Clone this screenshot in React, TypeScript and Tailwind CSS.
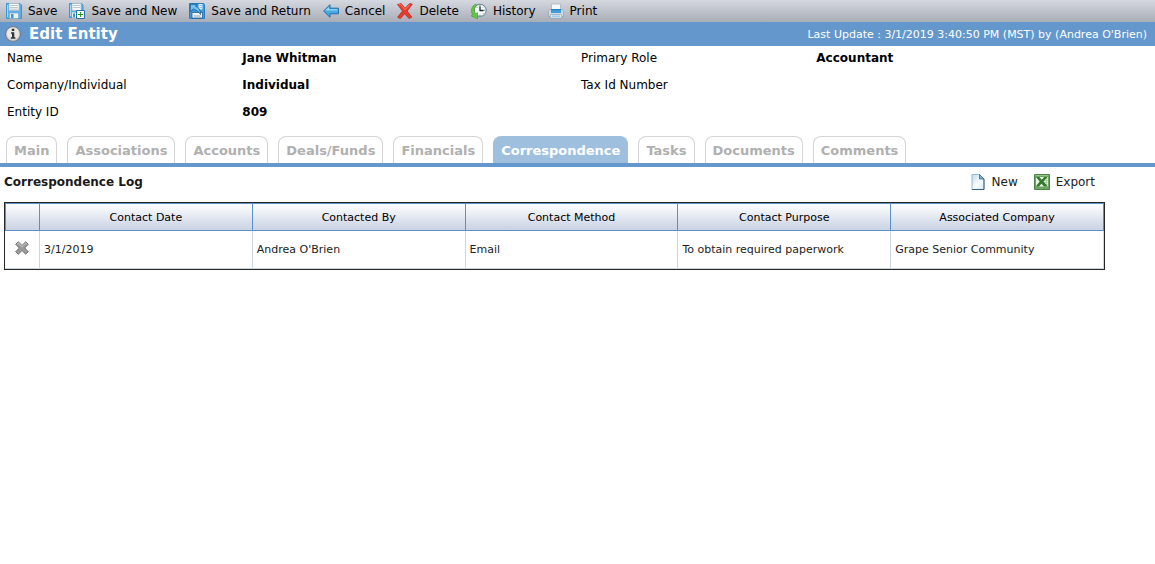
import { useState, ReactNode } from 'react';

const SaveIcon = () => (
  <svg width="16" height="16" viewBox="0 0 16 16" aria-hidden="true">
    <path d="M0.5 0.5h13.5l1.5 1.5v13.5h-15z" fill="#5db0e6" stroke="#3d96cf" />
    <path d="M3 0.5h10v7H3z" fill="#f4f6f8" stroke="#a9b9c6" strokeWidth="0.6" />
    <path d="M4 2.5h8M4 4.5h8M4 6.2h8" stroke="#b4bcc2" strokeWidth="0.8" />
    <path d="M3.5 10h9v5.5h-9z" fill="#edf1f4" stroke="#6fa3c4" strokeWidth="0.6" />
    <path d="M5 11h2.5v4H5z" fill="#3b97d0" />
    <path d="M1.5 2v12" stroke="#a5dafa" />
  </svg>
);

const SaveNewIcon = () => (
  <svg width="16" height="16" viewBox="0 0 16 16" aria-hidden="true">
    <path d="M0.5 0.5h12l1.5 1.5v12.5h-13.5z" fill="#5db0e6" stroke="#3d96cf" />
    <path d="M3 0.5h9v7H3z" fill="#f4f6f8" stroke="#a9b9c6" strokeWidth="0.6" />
    <path d="M4 2.5h7M4 4.5h7" stroke="#b4bcc2" strokeWidth="0.8" />
    <path d="M3 9.5h4.5v5H3z" fill="#edf1f4" />
    <path d="M4 10.5h2v3.5H4z" fill="#3b97d0" />
    <path d="M7.5 7.5h8v8h-8z" fill="#ffffff" stroke="#2874a8" />
    <path d="M11.5 9v5M9 11.5h5" stroke="#2a9a2a" strokeWidth="1.2" />
    <path d="M1.5 2v11" stroke="#a5dafa" />
  </svg>
);

const SaveReturnIcon = () => (
  <svg width="16" height="16" viewBox="0 0 16 16" aria-hidden="true">
    <path d="M0.5 0.5h14l1 1v14h-15z" fill="#3c9adb" stroke="#2c7fbe" />
    <path d="M9.5 1h4v5.5h-4z" fill="#dcecf8" />
    <path d="M10.5 2.5h2.5M10.5 4.5h2.5" stroke="#8ab4d4" strokeWidth="0.8" />
    <path d="M3 9.5h10.5v5.5H3z" fill="#eef3f7" stroke="#1c5685" strokeWidth="0.7" />
    <path d="M5 13h6.5" stroke="#89a5ba" />
    <path d="M1.3 1.3h6.9L6.5 3.2c3 0.8 5 3.6 5 8.3C9.7 8.6 7.5 7 4.3 6L1.3 8.8z" fill="#72c3f3" stroke="#17598f" strokeWidth="0.8" />
  </svg>
);

const CancelIcon = () => (
  <svg width="16" height="16" viewBox="0 0 16 16" aria-hidden="true">
    <path d="M0.6 8L7 1.7v3.5h8.4v5.6H7v3.5z" fill="#45a9e4" stroke="#1f6fae" strokeLinejoin="round" />
    <path d="M2.2 7.6L6 3.9v2.4h8.3v1.3z" fill="#9cd8f8" />
  </svg>
);

const DeleteIcon = () => (
  <svg width="16" height="16" viewBox="0 0 16 16" aria-hidden="true">
    <path
      d="M0.5 1.5L4.2 0.6 8 5.3 12.7 0.5l2.6 0.7L10.2 8l4.6 6.2-2.8 1.3L7.7 10.8 3.3 15.6 0.6 14.2 5.5 8z"
      fill="#ea3a2a"
      stroke="#b91e16"
      strokeWidth="0.7"
      strokeLinejoin="round"
    />
    <path d="M1.8 1.9l2-0.4L8 6.7l4.8-5" stroke="#ff8a76" strokeWidth="0.9" fill="none" />
  </svg>
);

const HistoryIcon = () => (
  <svg width="16" height="16" viewBox="0 0 16 16" aria-hidden="true">
    <circle cx="8.7" cy="7.5" r="7" fill="#8fa9b8" />
    <circle cx="9.1" cy="7.3" r="5.9" fill="#f7fafb" stroke="#526c7b" strokeWidth="0.6" />
    <path
      d="M4.5 1.2C0.6 3 -0.6 8 1.6 11.6L0.2 13l6.3 2.7V9.6L4.6 10.8C3 8.6 2.8 4.8 5.6 2.2z"
      fill="#62c944"
      stroke="#2d861d"
      strokeWidth="0.5"
    />
    <path d="M9 3.3v4.2h3.6" stroke="#1b2c38" strokeWidth="1.3" fill="none" />
    <path d="M9 2v1M9 11.7v1M14.2 7.3h-1M12.6 3.8l-0.6 0.6M12.6 10.9l-0.6-0.6M5.6 4.1l0.5 0.5" stroke="#3c4e59" strokeWidth="0.8" />
  </svg>
);

const PrintIcon = () => (
  <svg width="16" height="16" viewBox="0 0 16 16" aria-hidden="true">
    <path d="M3.5 1h9v6h-9z" fill="#f5f8fa" stroke="#a4b0ba" strokeWidth="0.7" />
    <path d="M0.5 8L2 6.5h12L15.5 8v5.5h-15z" fill="#d3dce3" stroke="#8fa0ae" strokeWidth="0.7" />
    <path d="M3 6h10v4H3z" fill="#3f9eda" />
    <path d="M3 6h10v1.2H3z" fill="#2b7fbe" />
    <path d="M2.8 11.5h10.4l0.8 3.5H2z" fill="#f7fafc" stroke="#7794a9" strokeWidth="0.6" />
    <path d="M3.8 12.4h8.4l0.3 1.4H3.5z" fill="#7bbfe7" />
  </svg>
);

const InfoIcon = () => (
  <svg width="16" height="16" viewBox="0 0 16 16" aria-hidden="true">
    <circle cx="8" cy="8" r="7.4" fill="#d0d0d0" stroke="#6d7378" strokeWidth="0.9" />
    <circle cx="8" cy="7.4" r="6" fill="#e8e8e8" />
    <path d="M6.8 2.8h2.5v2.3H6.8zM6 6.3h3.3v5h1.1v1.4H5.8v-1.4H7V7.7H6z" fill="#333333" />
  </svg>
);

const NewIcon = () => (
  <svg width="16" height="16" viewBox="0 0 16 16" aria-hidden="true">
    <defs>
      <linearGradient id="page" x1="0" y1="0" x2="1" y2="1">
        <stop offset="0" stopColor="#bcdcf0" />
        <stop offset="0.55" stopColor="#f8fcff" />
        <stop offset="1" stopColor="#d6e8f4" />
      </linearGradient>
    </defs>
    <path d="M2 0.5h7.5L14 5v10.5H2z" fill="url(#page)" stroke="#86a9c0" strokeWidth="0.8" />
    <path d="M14 5v10.5H2" stroke="#38617f" strokeWidth="1" fill="none" />
    <path d="M9.5 0.5V5H14z" fill="#79b3d5" stroke="#366c8f" strokeWidth="0.8" />
  </svg>
);

const ExcelIcon = () => (
  <svg width="16" height="16" viewBox="0 0 16 16" aria-hidden="true">
    <path d="M0.5 0.5h15v15H0.5z" fill="#6fa560" stroke="#4c8443" />
    <path d="M2 3h12v9.5H2z" fill="#eef4e9" />
    <path d="M10 4.5h4M10 6.5h4M10 8.5h4M10 10.5h4M12.5 3v9.5" stroke="#a3c395" strokeWidth="0.7" />
    <path d="M1.8 3h3.7l2.2 2.8L10.2 3h3.3L9.5 7.6l4.3 4.9h-3.9L7.5 9.7 5 12.5H1.6l4.1-4.9z" fill="#317b2d" />
    <path d="M1.5 1.5h13" stroke="#97c185" />
  </svg>
);

const RemoveIcon = () => (
  <svg width="14" height="14" viewBox="0 0 14 14" aria-hidden="true">
    <path
      d="M3.3 0.8L7 4.4l3.7-3.6 2.6 2.5L9.7 7l3.6 3.7-2.6 2.5L7 9.6l-3.7 3.6-2.6-2.5L4.3 7 0.7 3.3z"
      fill="#9b9b9b"
      stroke="#686868"
      strokeWidth="0.9"
      strokeLinejoin="round"
    />
    <path d="M2 3.3l1.3-1.2L7 5.7l3.7-3.6L12 3.3" stroke="#d0d0d0" strokeWidth="0.9" fill="none" />
  </svg>
);

const actions = [
  { label: 'Save', icon: <SaveIcon /> },
  { label: 'Save and New', icon: <SaveNewIcon /> },
  { label: 'Save and Return', icon: <SaveReturnIcon /> },
  { label: 'Cancel', icon: <CancelIcon /> },
  { label: 'Delete', icon: <DeleteIcon /> },
  { label: 'History', icon: <HistoryIcon /> },
  { label: 'Print', icon: <PrintIcon /> },
];

const tabs = [
  'Main',
  'Associations',
  'Accounts',
  'Deals/Funds',
  'Financials',
  'Correspondence',
  'Tasks',
  'Documents',
  'Comments',
];

const details = [
  [
    { label: 'Name', value: 'Jane Whitman' },
    { label: 'Company/Individual', value: 'Individual' },
    { label: 'Entity ID', value: '809' },
  ],
  [
    { label: 'Primary Role', value: 'Accountant' },
    { label: 'Tax Id Number', value: '' },
  ],
];

const columns = ['Contact Date', 'Contacted By', 'Contact Method', 'Contact Purpose', 'Associated Company'];

const initialRows = [
  { id: 1, cells: ['3/1/2019', "Andrea O'Brien", 'Email', 'To obtain required paperwork', 'Grape Senior Community'] },
];

function IconButton({ icon, label }: { icon: ReactNode; label: string }) {
  return (
    <button type="button" className="flex items-center gap-1.5 whitespace-nowrap">
      {icon}
      {label}
    </button>
  );
}

export default function App() {
  const [activeTab, setActiveTab] = useState('Correspondence');
  const [rows, setRows] = useState(initialRows);

  const removeRow = (id: number) => {
    setRows(rows.filter((row) => row.id !== id));
  };

  return (
    <div className="bg-white font-['DejaVu_Sans',Verdana,sans-serif] text-xs text-black">
      <div className="flex h-[22px] items-center gap-3 bg-linear-to-b from-[#d5d8df] to-[#a9adb7] px-1.5">
        {actions.map((action) => (
          <IconButton key={action.label} icon={action.icon} label={action.label} />
        ))}
      </div>

      <header className="flex h-6 items-center justify-between bg-[#6497cb] pr-2 pl-[5px] text-white">
        <div className="flex items-center gap-2">
          <InfoIcon />
          <h1 className="pt-0.5 text-[15px] font-bold">Edit Entity</h1>
        </div>
        <p className="pt-0.5 text-[11px]">Last Update : 3/1/2019 3:40:50 PM (MST) by (Andrea O'Brien)</p>
      </header>

      <div className="grid grid-cols-2 pt-px pl-[7px]">
        {details.map((group, i) => (
          <dl key={i}>
            {group.map((item) => (
              <div key={item.label} className="flex h-[27px] pt-[3px]">
                <dt className="w-[41%]">{item.label}</dt>
                <dd className="font-bold">{item.value}</dd>
              </div>
            ))}
          </dl>
        ))}
      </div>

      <nav className="mt-2 flex gap-2.5 border-b-4 border-[#6497cb] px-1.5">
        {tabs.map((tab) => (
          <button
            key={tab}
            type="button"
            onClick={() => setActiveTab(tab)}
            className={`h-[27px] rounded-t-lg border border-b-0 px-[7px] pt-0.5 text-[13px] font-bold ${
              tab === activeTab
                ? 'border-[#9fbfdf] bg-[#9fbfdf] text-white'
                : 'border-[#d4d4d4] bg-white text-[#b0b0b0]'
            }`}
          >
            {tab}
          </button>
        ))}
      </nav>

      <main className="mr-[50px] ml-1">
        <div className="flex h-[35px] items-center justify-between pr-2.5 pb-1.5">
          <h2 className="font-bold text-[#1a1a1a]">Correspondence Log</h2>
          <div className="flex gap-4 text-[#222222]">
            <IconButton icon={<NewIcon />} label="New" />
            <IconButton icon={<ExcelIcon />} label="Export" />
          </div>
        </div>

        <div className="border border-[#262626]">
          <table className="w-full table-fixed border-separate border-spacing-0 text-[11px]">
            <thead>
              <tr className="h-7 bg-linear-to-b from-[#fafcfd] from-10% to-[#cdd5e5] to-90%">
                <th className="w-[35px] border border-[#5b8fc9]" aria-label="Remove" />
                {columns.map((column) => (
                  <th key={column} className="border-y border-r border-[#5b8fc9] pt-0.5 font-normal">
                    {column}
                  </th>
                ))}
              </tr>
            </thead>
            <tbody>
              {rows.map((row) => (
                <tr key={row.id} className="h-[38px] text-[#222222]">
                  <td className="border-r border-b border-[#c9d5e2]">
                    <button
                      type="button"
                      aria-label="Remove entry"
                      onClick={() => removeRow(row.id)}
                      className="mx-auto block pb-1"
                    >
                      <RemoveIcon />
                    </button>
                  </td>
                  {row.cells.map((cell, i) => (
                    <td key={i} className="border-r border-b border-[#c9d5e2] px-1 pt-0.5">
                      {cell}
                    </td>
                  ))}
                </tr>
              ))}
            </tbody>
          </table>
        </div>
      </main>
    </div>
  );
}
